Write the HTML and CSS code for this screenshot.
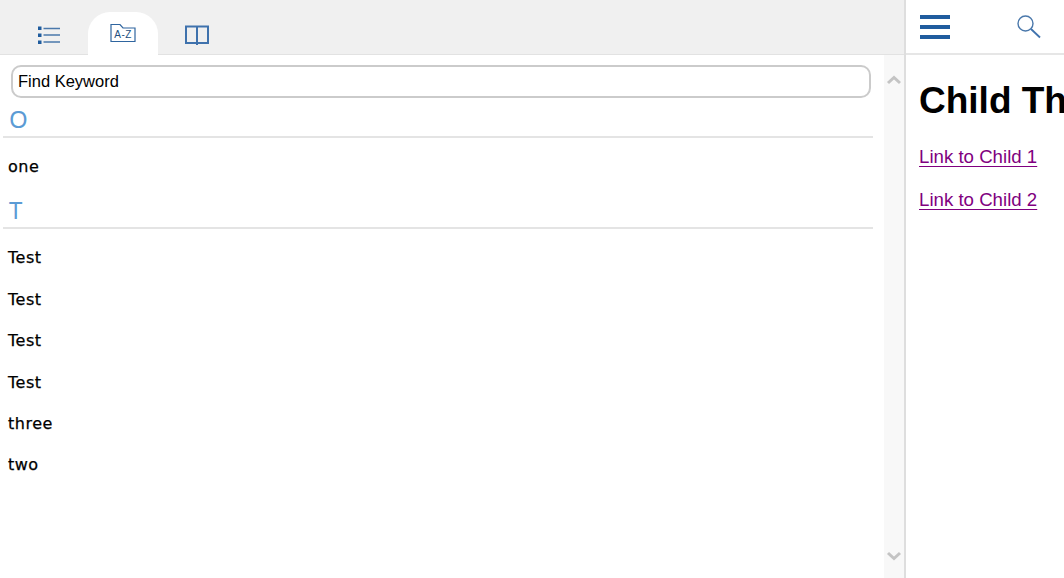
FILE: index.html
```html
<!DOCTYPE html>
<html lang="en">
    <head>
        <meta charset="UTF-8" />
        <meta name="viewport" content="width=device-width, initial-scale=1.0" />
        <title>Help</title>
        <link rel="stylesheet" href="styles.css">
    </head>
    <body>
        <div class="app">
            <div class="nav-pane">
                <div class="tabs">
                    <div class="tab">
                        <svg width="24" height="20" viewBox="0 0 24 20" fill="none">
                            <rect x="1" y="1.5" width="3.5" height="3.5" fill="#1f5c9e" />
                            <rect x="1" y="8.5" width="3.5" height="3.5" fill="#1f5c9e" />
                            <rect x="1" y="15.5" width="3.5" height="3.5" fill="#1f5c9e" />
                            <path d="M6.5 3.5H23M6.5 10H23M6.5 17H23" stroke="#4a78ab" stroke-width="1.5" />
                        </svg>
                    </div>
                    <div class="tab active">
                        <svg width="26" height="20" viewBox="0 0 26 20" fill="none">
                            <path d="M1 1.5H10L13 5H25V18.5H1Z" stroke="#2f659f" stroke-width="1.2" />
                            <text x="13" y="14.5" class="az">A-Z</text>
                        </svg>
                    </div>
                    <div class="tab">
                        <svg width="24" height="20" viewBox="0 0 24 20" fill="none">
                            <path d="M1 1.5H12V18H1ZM12 1.5H23V18H12ZM12 1V20" stroke="#3f72ad" stroke-width="2" />
                        </svg>
                    </div>
                </div>
                <div class="nav-body">
                    <div class="index">
                        <input class="search" type="text" placeholder="Find Keyword" />
                        <h2 class="letter">O</h2>
                        <ul class="terms">
                            <li>one</li>
                        </ul>
                        <h2 class="letter">T</h2>
                        <ul class="terms">
                            <li>Test</li>
                            <li>Test</li>
                            <li>Test</li>
                            <li>Test</li>
                            <li>three</li>
                            <li>two</li>
                        </ul>
                    </div>
                    <div class="scrollbar">
                        <svg width="16" height="10" viewBox="0 0 16 10" fill="none">
                            <path d="M2 8L8 2.5L14 8" stroke="#c4c4c4" stroke-width="3" />
                        </svg>
                        <svg width="16" height="10" viewBox="0 0 16 10" fill="none">
                            <path d="M2 2L8 7.5L14 2" stroke="#c4c4c4" stroke-width="3" />
                        </svg>
                    </div>
                </div>
            </div>
            <div class="topic-pane">
                <div class="toolbar">
                    <div class="burger">
                        <span></span>
                        <span></span>
                        <span></span>
                    </div>
                    <svg width="26" height="26" viewBox="0 0 26 26" fill="none">
                        <circle cx="9.5" cy="9.5" r="7.5" stroke="#4a78ab" stroke-width="1.4" />
                        <path d="M15 15L24 23.5" stroke="#3f72ad" stroke-width="1.8" />
                    </svg>
                </div>
                <div class="topic">
                    <h1>Child Three</h1>
                    <p><a href="#">Link to Child 1</a></p>
                    <p><a href="#">Link to Child 2</a></p>
                </div>
            </div>
        </div>
    </body>
</html>
```

FILE: styles.css
```css
html,
body {
    height: 100%;
}
body {
    margin: 0;
    overflow: hidden;
    background-color: #fff;
    font-family: "Liberation Sans", Arial, sans-serif;
}
.app {
    display: flex;
    height: 100vh;
}
.nav-pane {
    display: flex;
    flex-direction: column;
    flex: none;
    box-sizing: border-box;
    width: 906px;
    border-right: 2px solid #dedede;
}
.tabs {
    display: flex;
    flex: none;
    box-sizing: border-box;
    height: 55px;
    padding: 12px 0 0 14px;
    gap: 4px;
    background-color: #f0f0f0;
    border-bottom: 1px solid #e2e2e2;
}
.tab {
    display: flex;
    justify-content: center;
    padding-top: 13px;
    width: 70px;
    height: 43px;
    box-sizing: border-box;
    border-radius: 22px 22px 0 0;
}
.tab.active {
    background-color: #fff;
    padding-top: 11px;
}
.az {
    font-family: "Liberation Sans", Arial, sans-serif;
    font-size: 10px;
    letter-spacing: 0.4px;
    text-anchor: middle;
    fill: #234f80;
}
.nav-body {
    display: flex;
    flex: 1;
    min-height: 0;
}
.index {
    flex: 1;
    padding: 10px 11px 0 3px;
}
.search {
    display: block;
    box-sizing: border-box;
    width: 860px;
    height: 33px;
    margin-left: 8px;
    padding: 0 5px;
    border: 2px solid #cbcbcb;
    border-radius: 10px;
    font-family: "Liberation Sans", Arial, sans-serif;
    font-size: 16.5px;
    outline: none;
}
.search::placeholder {
    color: #000;
    opacity: 1;
}
.letter {
    margin: 0;
    padding-left: 6px;
    height: 40px;
    box-sizing: border-box;
    line-height: 41px;
    font-family: "Noto Sans", sans-serif;
    font-size: 24px;
    font-weight: 400;
    color: #5b9bd5;
    border-bottom: 2px solid #e4e4e4;
}
.terms {
    list-style: none;
    margin: 0;
    padding: 8px 0 2px 5px;
}
.terms li {
    height: 41.4px;
    line-height: 41px;
    font-family: "DejaVu Sans", sans-serif;
    font-size: 16px;
    letter-spacing: 0.5px;
    -webkit-text-stroke: 0.25px #000;
    color: #000;
}
.scrollbar {
    display: flex;
    flex-direction: column;
    justify-content: space-between;
    align-items: center;
    flex: none;
    width: 20px;
    padding: 20px 0 17px;
    box-sizing: border-box;
    background-color: #f8f8f8;
}
.topic-pane {
    flex: 1;
    min-width: 0;
    overflow: hidden;
}
.toolbar {
    display: flex;
    align-items: center;
    box-sizing: border-box;
    height: 55px;
    padding: 0 0 0 14px;
    gap: 66px;
    border-bottom: 2px solid #e6e6e6;
}
.burger {
    display: flex;
    flex-direction: column;
    gap: 6px;
    width: 30px;
}
.burger span {
    height: 4px;
    background-color: #1f5c9e;
}
.topic {
    padding: 0 0 0 13px;
    white-space: nowrap;
}
.topic h1 {
    margin: 24px 0 0;
    font-size: 37px;
    line-height: 44px;
}
.topic p {
    margin: 0;
    padding-top: 19px;
    font-size: 18.67px;
    line-height: 24px;
}
.topic p:first-of-type {
    padding-top: 22px;
}
.topic a {
    color: #800080;
    text-decoration-thickness: 1px;
    text-underline-offset: 3px;
}
```
